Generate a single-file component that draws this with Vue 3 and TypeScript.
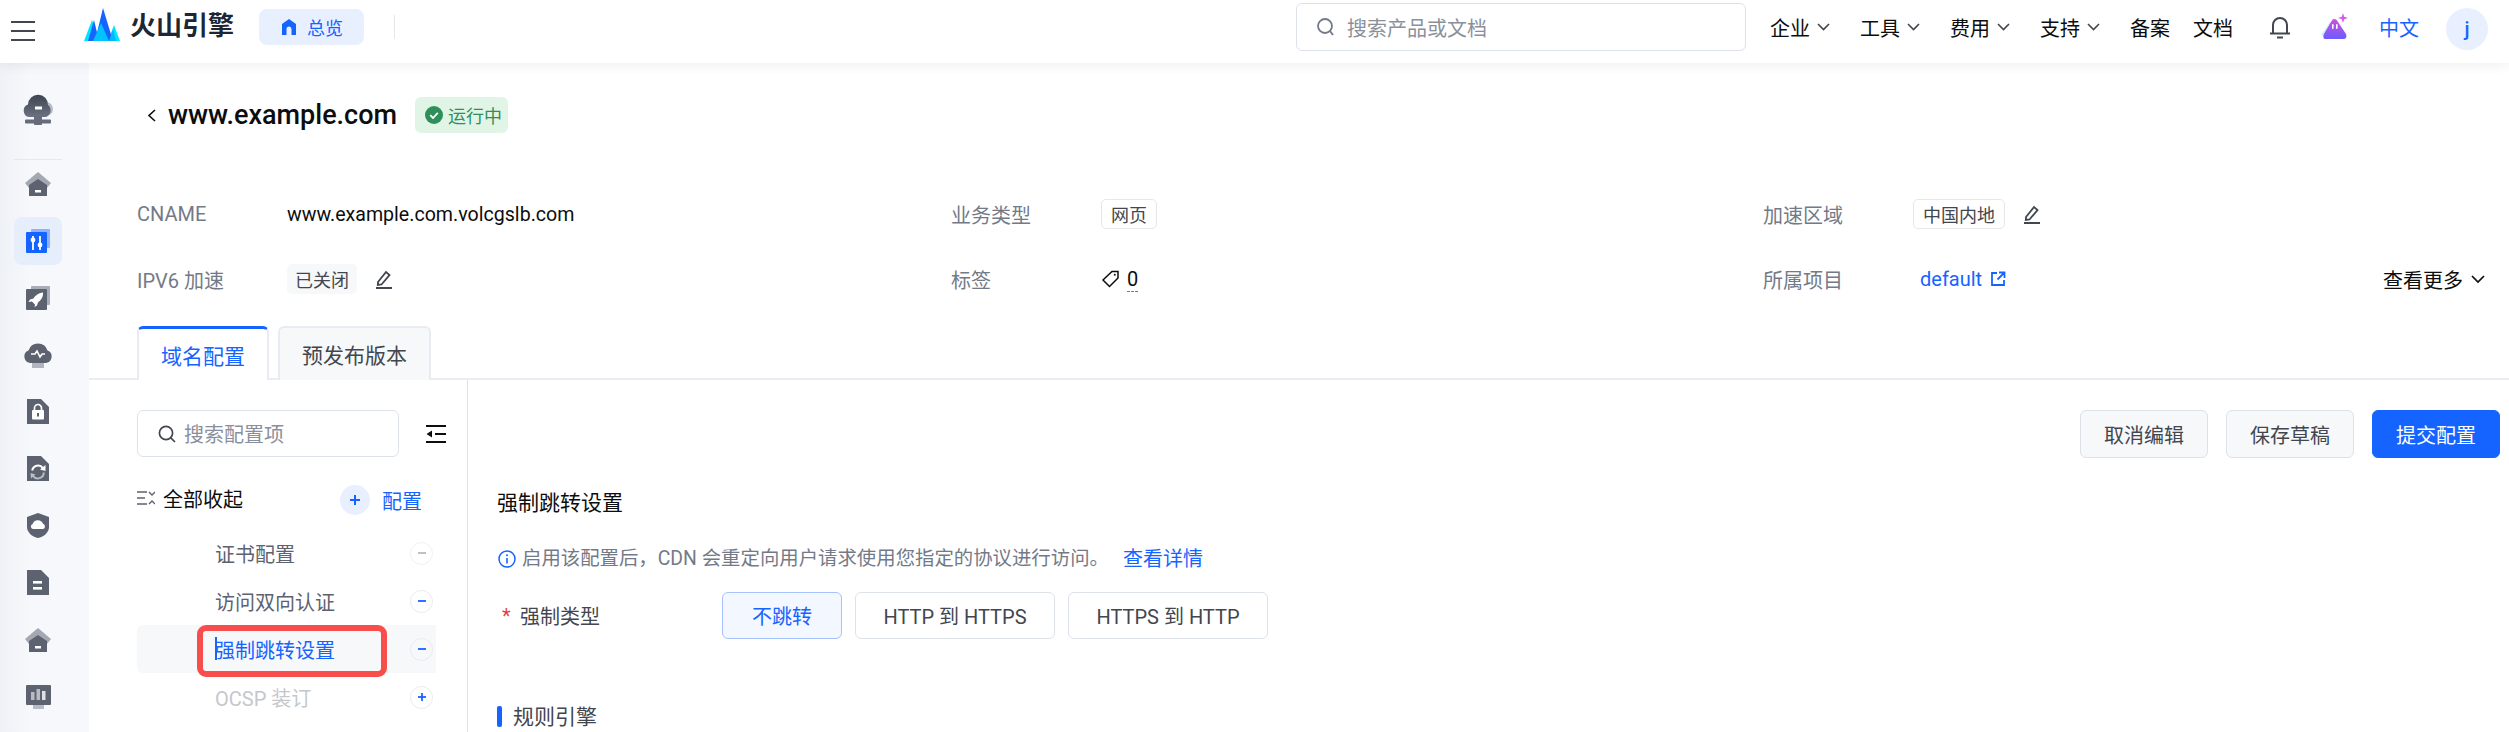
<template>
  <div class="page">
    <header class="topbar">
      <div class="burger"><i></i><i></i><i></i></div>
      <svg class="logo" width="36" height="33" viewBox="0 0 36 33">
        <path d="M0 33 L8 12 L16 33Z" fill="#00e5ff" />
        <path d="M24 33 L30 17 L36 33Z" fill="#00e5ff" />
        <path d="M4 33 L10 12 L15 33Z" fill="#1664ff" />
        <path d="M11 33 L19 0 L29 33Z" fill="#1664ff" />
        <path d="M25 33 L29 21 L32 33Z" fill="#00b8ff" />
        <path d="M9 33 L17 15 L25 33Z" fill="#00c4ff" />
      </svg>
      <span class="brand">火山引擎</span>
      <div class="home-btn">
        <svg width="18" height="18" viewBox="0 0 18 18"><path d="M9 1 L16 6 V17 H11.5 V11 A2.5 2.5 0 0 0 6.5 11 V17 H2 V6Z" fill="#1664ff" /></svg>
        <span>总览</span>
      </div>
      <div class="top-divider"></div>

      <div class="top-search">
        <svg width="18" height="20" viewBox="0 0 18 20"><circle cx="8" cy="9" r="7" fill="none" stroke="#737a87" stroke-width="1.8" /><path d="M13 14 L16 18" stroke="#737a87" stroke-width="1.8" /></svg>
        <span>搜索产品或文档</span>
      </div>
      <nav class="top-nav">
        <div v-for="item in navMenus" :key="item" class="nav-item">
          {{ item }}
          <svg width="13" height="8" viewBox="0 0 13 8"><path d="M1 1 L6.5 6.5 L12 1" fill="none" stroke="#42464e" stroke-width="1.6" /></svg>
        </div>
      </nav>
      <span class="nav-plain first">备案</span>
      <span class="nav-plain">文档</span>
      <svg class="bell" width="22" height="24" viewBox="0 0 22 24">
        <path d="M4 18 V10 A7 7 0 0 1 18 10 V18" fill="none" stroke="#42464e" stroke-width="2" />
        <path d="M1 18.5 H21" stroke="#42464e" stroke-width="2" />
        <path d="M8 22.5 H14" stroke="#42464e" stroke-width="2" />
      </svg>
      <svg class="ai" width="28" height="28" viewBox="0 0 28 28">
        <defs>
          <linearGradient id="aiFill" x1="0" y1="0" x2="0" y2="1">
            <stop offset="0" stop-color="#d14fe0" />
            <stop offset="1" stop-color="#6a5cff" />
          </linearGradient>
        </defs>
        <path d="M0 22 L9 9 L14 12 L6 26Z" fill="#c8f0fb" />
        <path d="M13 6 C15 6 16 7 17 9 L25 21 C26 24 25 26 22 26 H5 C2 26 2 24 3 21 L10 9 C11 7 12 6 13 6Z" fill="url(#aiFill)" />
        <rect x="11" y="11" width="1.6" height="5" rx=".8" fill="#fff" />
        <rect x="15" y="11" width="1.6" height="5" rx=".8" fill="#fff" />
        <path d="M22 0 L23.2 3.8 L27 5 L23.2 6.2 L22 10 L20.8 6.2 L17 5 L20.8 3.8Z" fill="#d65ae8" />
      </svg>
      <span class="lang">中文</span>
      <div class="avatar">j</div>
    </header>

    <div class="body">
      <aside class="sidebar">
        <div class="side-item">
          <svg width="48" height="48" viewBox="0 0 48 48">
            <defs>
              <linearGradient id="cloudFill" x1="0" y1="0" x2="0" y2="1">
                <stop offset="0" stop-color="#3d4452" />
                <stop offset="1" stop-color="#6c7280" />
              </linearGradient>
            </defs>
            <circle cx="32" cy="23" r="7" fill="#b7bbc5" />
            <path d="M15 31 A6.5 6.5 0 0 1 14 18.5 A10 10 0 0 1 34 19 A7 7 0 0 1 32 31Z" fill="url(#cloudFill)" />
            <rect x="21" y="20.5" width="7" height="3" fill="#fff" />
            <rect x="20" y="30" width="8" height="9" rx="1" fill="#666c7a" />
            <rect x="11" y="33.5" width="26" height="4" rx="1" fill="#666c7a" />
          </svg>
        </div>
        <div class="side-divider"></div>
        <div class="side-item">
          <svg width="48" height="48" viewBox="0 0 48 48">
            <path d="M11 23 L24 12 L37 23 L33 28 H15Z" fill="#a4a8b2" />
            <path d="M15 25 L24 19 L33 25 V36 H15Z" fill="#5c6270" />
            <rect x="21" y="30" width="6" height="2.5" fill="#fff" />
          </svg>
        </div>
        <div class="side-item active">
          <svg width="48" height="48" viewBox="0 0 48 48">
            <rect x="17" y="12" width="19" height="19" rx="1" fill="#8fb2fb" />
            <rect x="12" y="15" width="21" height="21" rx="1" fill="#1664ff" />
            <path d="M19 19 V33 M26 19 V33" stroke="#fff" stroke-width="1.8" />
            <circle cx="19" cy="23" r="2.4" fill="#fff" />
            <circle cx="26" cy="28" r="2.4" fill="#fff" />
          </svg>
        </div>
        <div class="side-item">
          <svg width="48" height="48" viewBox="0 0 48 48">
            <rect x="17" y="12" width="19" height="19" rx="1" fill="#a9adb7" />
            <rect x="12" y="15" width="21" height="21" rx="1" fill="#5c6270" />
            <path d="M29 18.5 C24 19 21 22 19.5 24.5 L16 25.5 L14.5 28 L18 27.5 L21 30.5 L20.5 33 L23 31.5 L24 28.5 C27 26 29.5 23 29 18.5Z" fill="#fff" />
          </svg>
        </div>
        <div class="side-item">
          <svg width="48" height="48" viewBox="0 0 48 48">
            <rect x="18" y="29" width="12" height="8" fill="#b1b5bf" />
            <path d="M16 32 A6.5 6.5 0 0 1 14.5 19.5 A10 10 0 0 1 33.5 19.5 A6.5 6.5 0 0 1 32 32Z" fill="#5c6270" />
            <path d="M17 23 H21 L23 20 L26 26 L28 23 H31" fill="none" stroke="#fff" stroke-width="1.6" />
          </svg>
        </div>
        <div class="side-item">
          <svg width="48" height="48" viewBox="0 0 48 48">
            <path d="M13 11 H27 L35 19 V36 H13Z" fill="#5c6270" />
            <rect x="18" y="22" width="12" height="9.5" rx="1" fill="#fff" />
            <path d="M20.5 22 V20 A3.5 3.5 0 0 1 27.5 20 V22" fill="none" stroke="#fff" stroke-width="1.7" />
            <rect x="23" y="25" width="2" height="3.5" fill="#5c6270" />
          </svg>
        </div>
        <div class="side-item">
          <svg width="48" height="48" viewBox="0 0 48 48">
            <path d="M13 11 H27 L35 19 V36 H13Z" fill="#5c6270" />
            <path d="M18.2 25.5 A6 6 0 0 1 28.8 22.8" fill="none" stroke="#fff" stroke-width="2" />
            <path d="M29.8 27.5 A6 6 0 0 1 19 31" fill="none" stroke="#b9bdc6" stroke-width="2" />
            <path d="M31.5 20 L31.5 26 L26 24.5Z" fill="#fff" />
            <path d="M17 33.5 L16.5 28 L21.5 29.5Z" fill="#b9bdc6" />
          </svg>
        </div>
        <div class="side-item">
          <svg width="48" height="48" viewBox="0 0 48 48">
            <path d="M24 11 L35 15 V25 C35 31 29 35 24 36 C19 35 13 31 13 25 V15Z" fill="#5c6270" />
            <path d="M19 27 A2.6 2.6 0 0 1 18.6 22 A5.5 5.5 0 0 1 29 21.8 A2.7 2.7 0 0 1 29 27Z" fill="#fff" />
          </svg>
        </div>
        <div class="side-item">
          <svg width="48" height="48" viewBox="0 0 48 48">
            <path d="M13 11 H27 L35 19 V36 H13Z" fill="#5c6270" />
            <rect x="19" y="22" width="9" height="2.6" fill="#fff" />
            <rect x="19" y="28" width="9" height="2.6" fill="#fff" />
          </svg>
        </div>
        <div class="side-item">
          <svg width="48" height="48" viewBox="0 0 48 48">
            <path d="M11 23 L24 12 L37 23 L33 28 H15Z" fill="#a4a8b2" />
            <path d="M15 25 L24 19 L33 25 V36 H15Z" fill="#5c6270" />
            <rect x="21" y="30" width="6" height="2.5" fill="#fff" />
          </svg>
        </div>
        <div class="side-item">
          <svg width="48" height="48" viewBox="0 0 48 48">
            <rect x="19" y="30" width="11" height="6" fill="#b7bbc5" />
            <rect x="12" y="12" width="25" height="20" rx="1" fill="#5c6270" />
            <rect x="17" y="19" width="3.5" height="8" fill="#b7bbc5" />
            <rect x="22.5" y="16" width="3.5" height="11" fill="#b7bbc5" />
            <rect x="28" y="18" width="3.5" height="9" fill="#dfe1e6" />
          </svg>
        </div>
      </aside>

      <main class="main">
        <div class="title-row">
          <svg class="back" width="9" height="13" viewBox="0 0 9 13"><path d="M8 1 L2 6.5 L8 12" fill="none" stroke="#0c0d0e" stroke-width="1.6" /></svg>
          <h1>www.example.com</h1>
          <div class="status">
            <svg width="18" height="18" viewBox="0 0 18 18"><circle cx="9" cy="9" r="9" fill="#2f8f5b" /><path d="M5.2 9.2 L8 12 L12.8 6.8" fill="none" stroke="#fff" stroke-width="1.8" /></svg>
            <span>运行中</span>
          </div>
        </div>

        <section class="meta">
          <div class="meta-cell">
            <span class="meta-label">CNAME</span>
            <span class="cname">www.example.com.volcgslb.com</span>
          </div>
          <div class="meta-cell">
            <span class="meta-label">业务类型</span>
            <span class="tag outline">网页</span>
          </div>
          <div class="meta-cell">
            <span class="meta-label">加速区域</span>
            <span class="tag outline">中国内地</span>
            <svg class="pencil" width="20" height="20" viewBox="0 0 20 20"><path d="M4 13 L12 3 L15.5 6 L7.5 15.5 L3.8 16Z" fill="none" stroke="#42464e" stroke-width="1.8" /><path d="M2 19 H18" stroke="#42464e" stroke-width="2" /></svg>
          </div>
          <div class="meta-cell">
            <span class="meta-label">IPV6 加速</span>
            <span class="tag filled">已关闭</span>
            <svg class="pencil" width="20" height="20" viewBox="0 0 20 20"><path d="M4 13 L12 3 L15.5 6 L7.5 15.5 L3.8 16Z" fill="none" stroke="#42464e" stroke-width="1.8" /><path d="M2 19 H18" stroke="#42464e" stroke-width="2" /></svg>
          </div>
          <div class="meta-cell">
            <span class="meta-label">标签</span>
            <svg width="19" height="18" viewBox="0 0 19 18"><path d="M11 1.5 H17 V8 L8.5 16.5 L2 10Z" fill="none" stroke="#0c0d0e" stroke-width="1.5" /><circle cx="13.8" cy="4.8" r="1" fill="#0c0d0e" /></svg>
            <span class="tag-count">0</span>
          </div>
          <div class="meta-cell">
            <span class="meta-label">所属项目</span>
            <span class="project">default</span>
            <svg class="ext" width="16" height="16" viewBox="0 0 16 16"><path d="M7 2 H2 V14 H14 V9" fill="none" stroke="#1664ff" stroke-width="1.8" /><path d="M9 1.5 H14.5 V7 M14.5 1.5 L7.5 8.5" fill="none" stroke="#1664ff" stroke-width="1.8" /></svg>
            <div class="more">
              查看更多
              <svg width="14" height="9" viewBox="0 0 14 9"><path d="M1 1 L7 7 L13 1" fill="none" stroke="#0c0d0e" stroke-width="1.7" /></svg>
            </div>
          </div>
        </section>

        <div class="tabs">
          <div class="tab current">域名配置</div>
          <div class="tab">预发布版本</div>
        </div>

        <div class="config">
          <div class="config-nav">
            <div class="nav-top">
              <div class="nav-search">
                <svg width="18" height="18" viewBox="0 0 18 18"><circle cx="8" cy="8" r="6.6" fill="none" stroke="#42464e" stroke-width="1.7" /><path d="M12.8 12.8 L17 17" stroke="#42464e" stroke-width="1.7" /></svg>
                <span>搜索配置项</span>
              </div>
              <svg width="20" height="18" viewBox="0 0 20 18"><path d="M0 1 H20 M9 9 H20 M0 17 H20" stroke="#0c0d0e" stroke-width="2" /><path d="M6 5.5 V12.5 L0.5 9Z" fill="#0c0d0e" /></svg>
            </div>
            <div class="nav-head">
              <svg width="18" height="14" viewBox="0 0 18 14"><path d="M0 1 H10 M0 7 H8 M0 13 H10" stroke="#5c6270" stroke-width="1.6" /><path d="M12 1 L15 4 L18 1 M12 13 L15 10 L18 13" fill="none" stroke="#5c6270" stroke-width="1.4" /></svg>
              <span class="collapse-all">全部收起</span>
              <span class="plus-big">
                <svg width="10" height="10" viewBox="0 0 10 10"><path d="M5 0 V10 M0 5 H10" stroke="#1664ff" stroke-width="2" /></svg>
              </span>
              <span class="add-config">配置</span>
            </div>
            <div
              v-for="row in configRows"
              :key="row.name"
              class="nav-row"
              :class="{ selected: row.selected, disabled: row.disabled }"
            >
              <span class="row-name"><i v-if="row.selected" class="caret"></i>{{ row.name }}</span>
              <span class="row-btn" :class="{ soft: row.soft }">
                <svg width="8" height="8" viewBox="0 0 8 8">
                  <path v-if="row.disabled" d="M4 0 V8" stroke="#1664ff" stroke-width="1.8" />
                  <path d="M0 4 H8" :stroke="row.soft ? '#b5b9c2' : '#1664ff'" stroke-width="1.8" />
                </svg>
              </span>
              <div v-if="row.selected" class="callout"></div>
            </div>
          </div>

          <div class="config-body">
            <div class="actions">
              <button class="btn">取消编辑</button>
              <button class="btn">保存草稿</button>
              <button class="btn primary">提交配置</button>
            </div>
            <h2 class="section-title">强制跳转设置</h2>
            <div class="hint">
              <svg width="18" height="18" viewBox="0 0 18 18"><circle cx="9" cy="9" r="8" fill="none" stroke="#1664ff" stroke-width="1.5" /><path d="M9 8 V13.5" stroke="#1664ff" stroke-width="1.6" /><circle cx="9" cy="5.3" r="1" fill="#1664ff" /></svg>
              <span class="hint-text">启用该配置后，CDN 会重定向用户请求使用您指定的协议进行访问。</span>
              <a class="detail">查看详情</a>
            </div>
            <div class="form-row">
              <label class="form-label"><em>*</em>强制类型</label>
              <div class="radios">
                <div v-for="opt in redirectOptions" :key="opt.text" class="radio" :class="{ on: opt.on }" :style="{ width: opt.width + 'px' }">
                  {{ opt.text }}
                </div>
              </div>
            </div>
            <h3 class="rule-title">规则引擎</h3>
          </div>
        </div>
      </main>
    </div>
  </div>
</template>

<script setup lang="ts">
interface ConfigRow {
  name: string
  selected?: boolean
  disabled?: boolean
  soft?: boolean
}

const navMenus = ['企业', '工具', '费用', '支持']

const configRows: ConfigRow[] = [
  { name: '证书配置', soft: true },
  { name: '访问双向认证' },
  { name: '强制跳转设置', selected: true },
  { name: 'OCSP 装订', disabled: true },
]

const redirectOptions = [
  { text: '不跳转', width: 120, on: true },
  { text: 'HTTP 到 HTTPS', width: 200, on: false },
  { text: 'HTTPS 到 HTTP', width: 200, on: false },
]
</script>

<style>
html,
body {
  margin: 0;
  overflow: hidden;
  background: #fff;
}
</style>

<style scoped>
.page {
  width: 2509px;
  height: 732px;
  overflow: hidden;
  font-family: Roboto, "Noto Sans CJK SC", sans-serif;
  font-size: 20px;
  color: #0c0d0e;
  display: flex;
  flex-direction: column;
}

/* top bar */
.topbar {
  height: 63px;
  flex: none;
  display: flex;
  align-items: center;
  padding: 0 21px 0 11px;
  box-sizing: border-box;
  background: #fff;
  box-shadow: 0 2px 12px rgba(0, 0, 0, 0.07);
  position: relative;
  z-index: 2;
}
.burger {
  width: 24px;
  height: 20px;
  display: flex;
  flex-direction: column;
  justify-content: space-between;
  margin-bottom: 10px;
  margin-top: 8px;
}
.burger i {
  height: 2px;
  background: #41464f;
}
.logo {
  margin-left: 49px;
  margin-bottom: 13px;
  margin-top: -1px;
  flex: none;
}
.brand {
  margin-left: 10px;
  font-size: 26px;
  font-weight: 700;
  color: #1d2633;
  line-height: 30px;
  margin-bottom: 11px;
  width: 129px;
}
.home-btn {
  width: 105px;
  height: 36px;
  margin-top: -9px;
  background: #e8f0ff;
  border-radius: 8px;
  display: flex;
  align-items: center;
  justify-content: center;
  gap: 9px;
  color: #1664ff;
  font-size: 18px;
}
.top-divider {
  width: 1px;
  height: 24px;
  background: #e4e6ea;
  margin-left: 30px;
  margin-top: -9px;
}
.top-search {
  margin-left: auto;
  width: 450px;
  height: 48px;
  margin-top: -9px;
  box-sizing: border-box;
  border: 1px solid #dde2e9;
  border-radius: 6px;
  display: flex;
  align-items: center;
  padding-left: 20px;
  gap: 12px;
  color: #8a909b;
  font-size: 20px;
}
.top-nav {
  display: flex;
  gap: 30px;
  margin-left: 24px;
  margin-top: -9px;
}
.nav-item {
  display: flex;
  align-items: center;
  gap: 7px;
}
.nav-plain {
  margin-top: -9px;
  margin-left: 23px;
}
.nav-plain.first {
  margin-left: 30px;
}
.bell {
  margin-left: 36px;
  margin-top: -9px;
}
.ai {
  margin-left: 30px;
  margin-top: -9px;
}
.lang {
  margin-left: 30px;
  margin-top: -9px;
  color: #1664ff;
}
.avatar {
  margin-left: 27px;
  margin-top: -5px;
  width: 42px;
  height: 42px;
  border-radius: 50%;
  background: #e8f0ff;
  color: #1664ff;
  font-weight: 500;
  display: flex;
  align-items: center;
  justify-content: center;
}

/* left rail */
.body {
  flex: 1;
  display: flex;
  min-height: 0;
}
.sidebar {
  width: 89px;
  flex: none;
  box-sizing: border-box;
  padding: 23px 0 0 14px;
  background: linear-gradient(90deg, #eef1f6 0, #f6f8fb 30px);
  display: flex;
  flex-direction: column;
  gap: 9px;
}
.side-item {
  width: 48px;
  height: 48px;
  flex: none;
  border-radius: 8px;
}
.side-item svg {
  display: block;
}
.side-item.active {
  background: #e6eefb;
}
.side-divider {
  width: 48px;
  height: 1px;
  flex: none;
  background: #e6e8ec;
  margin: 16px 0 -9px;
}

/* main */
.main {
  flex: 1;
  min-width: 0;
  background: #fff;
}
.title-row {
  height: 104px;
  display: flex;
  align-items: center;
  padding-left: 58px;
}
.back {
  margin-right: 12px;
}
.title-row h1 {
  margin: 0;
  font-size: 27px;
  font-weight: 500;
}
.status {
  margin-left: 18px;
  height: 36px;
  width: 93px;
  box-sizing: border-box;
  padding-left: 10px;
  border-radius: 6px;
  background: #e1f5e7;
  color: #2f8f5b;
  font-size: 18px;
  display: flex;
  align-items: center;
  gap: 5px;
}
.meta {
  display: grid;
  grid-template-columns: 814px 812px 1fr;
  grid-auto-rows: 36px;
  row-gap: 29px;
  padding: 29px 0 0 48px;
}
.meta-cell {
  display: flex;
  align-items: center;
}
.meta-label {
  width: 150px;
  color: #737a87;
  flex: none;
}
.cname {
  font-size: 19.6px;
}
.tag {
  height: 30px;
  box-sizing: border-box;
  padding: 0 9px;
  border-radius: 5px;
  font-size: 18px;
  color: #42464e;
  display: flex;
  align-items: center;
}
.tag.outline {
  border: 1px solid #e5e7eb;
}
.tag.filled {
  background: #f6f8fa;
  padding: 0 8px;
}
.pencil {
  margin-left: 17px;
}
.tag-count {
  margin-left: 7px;
  border-bottom: 1px dashed #737a87;
  line-height: 24px;
}
.project {
  margin-left: 7px;
  color: #1664ff;
}
.ext {
  margin-left: 8px;
}
.more {
  margin-left: auto;
  margin-right: 24px;
  display: flex;
  align-items: center;
  gap: 8px;
}
.tabs {
  margin-top: 29px;
  height: 54px;
  box-sizing: border-box;
  padding-left: 48px;
  display: flex;
  gap: 9px;
  border-bottom: 2px solid #eaedf1;
}
.tab {
  height: 54px;
  width: 153px;
  box-sizing: border-box;
  display: flex;
  align-items: center;
  justify-content: center;
  font-size: 21px;
  color: #42464e;
  background: #f6f8fa;
  border: 2px solid #e8ecf2;
  border-bottom: 0;
  border-radius: 6px 6px 0 0;
}
.tab.current {
  width: 132px;
  color: #1664ff;
  background: #fff;
  border-top: 3px solid #1664ff;
}

/* config area */
.config {
  display: flex;
  height: 352px;
}
.config-nav {
  width: 379px;
  flex: none;
  box-sizing: border-box;
  padding: 30px 20px 0 48px;
  border-right: 1px solid #dde2e9;
}
.nav-top {
  display: flex;
  align-items: center;
  justify-content: space-between;
  padding-right: 1px;
}
.nav-search {
  width: 262px;
  height: 47px;
  box-sizing: border-box;
  border: 1px solid #dde2e9;
  border-radius: 6px;
  display: flex;
  align-items: center;
  padding-left: 20px;
  gap: 8px;
  color: #8a909b;
}
.nav-head {
  height: 46px;
  margin: 20px 0 6px;
  display: flex;
  align-items: center;
}
.collapse-all {
  margin-left: 8px;
  margin-top: -4px;
}
.nav-head > svg {
  margin-top: -4px;
}
.plus-big {
  margin-left: 97px;
  width: 30px;
  height: 30px;
  border-radius: 50%;
  background: #e8f0ff;
  display: flex;
  align-items: center;
  justify-content: center;
}
.add-config {
  margin-left: 12px;
  color: #1664ff;
}
.nav-row {
  position: relative;
  width: 299px;
  height: 48px;
  box-sizing: border-box;
  padding: 0 3px 0 78px;
  display: flex;
  align-items: center;
  justify-content: space-between;
  color: #5c6270;
}
.nav-row.selected {
  background: #f6f8fa;
  border-radius: 6px 0 0 6px;
  color: #1664ff;
}
.nav-row.disabled {
  color: #c4c7cc;
}
.row-name {
  display: flex;
  align-items: center;
  position: relative;
}
.caret {
  position: absolute;
  left: 0;
  top: 2px;
  width: 1.5px;
  height: 23px;
  background: #1664ff;
}
.row-btn {
  width: 23px;
  height: 23px;
  box-sizing: border-box;
  border: 1.5px solid #e8ebf0;
  border-radius: 50%;
  background: #fff;
  display: flex;
  align-items: center;
  justify-content: center;
}
.nav-row.selected .row-btn {
  background: #f6f8fa;
}
.row-btn.soft {
  border-color: #f0f1f4;
}
.callout {
  position: absolute;
  left: 60px;
  top: 0;
  width: 190px;
  height: 52px;
  box-sizing: border-box;
  border: 6px solid #f84e4b;
  border-radius: 9px;
}
.config-body {
  flex: 1;
  min-width: 0;
  padding: 30px 9px 0 29px;
}
.actions {
  display: flex;
  justify-content: flex-end;
  gap: 18px;
}
.btn {
  width: 128px;
  height: 48px;
  border: 1px solid #dde2e9;
  border-radius: 6px;
  background: #f6f8fa;
  color: #42464e;
  font: inherit;
  padding: 0;
}
.btn.primary {
  background: #1664ff;
  border-color: #1664ff;
  color: #fff;
}
.section-title {
  margin: 31px 0 0;
  font-size: 21px;
  font-weight: 400;
  line-height: 28px;
}
.hint {
  margin-top: 28px;
  line-height: 28px;
  display: flex;
  align-items: center;
  color: #737a87;
}
.hint svg {
  margin-left: 1px;
  margin-right: 6px;
}
.hint-text {
  font-size: 19.4px;
}
.detail {
  margin-left: 14px;
  color: #1664ff;
}
.form-row {
  margin-top: 19px;
  display: flex;
  align-items: center;
}
.form-label {
  width: 225px;
  flex: none;
  color: #42464e;
  display: flex;
  align-items: center;
}
.form-label em {
  font-style: normal;
  color: #e63f3f;
  margin-left: 5px;
  width: 18px;
}
.radios {
  display: flex;
  gap: 13px;
}
.radio {
  height: 47px;
  box-sizing: border-box;
  border: 1px solid #dde2e9;
  border-radius: 6px;
  display: flex;
  align-items: center;
  justify-content: center;
  color: #42464e;
}
.radio.on {
  background: #f3f7ff;
  border-color: #a5c3fb;
  color: #1664ff;
}
.rule-title {
  margin: 64px 0 0;
  font-size: 21px;
  font-weight: 400;
  line-height: 28px;
  color: #42464e;
  padding-left: 16px;
  position: relative;
}
.rule-title::before {
  content: "";
  position: absolute;
  left: 0;
  top: 3px;
  width: 5px;
  height: 21px;
  border-radius: 2px;
  background: #1664ff;
}
</style>
